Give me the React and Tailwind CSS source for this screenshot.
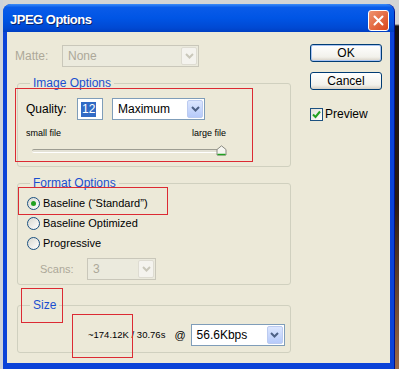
import React from "react";

const Chevron = ({ color = "#4d6185" }) => (
  <svg width="9" height="6" viewBox="0 0 9 6">
    <path d="M1 1 L4.5 4.5 L8 1" fill="none" stroke={color} strokeWidth="2" />
  </svg>
);

const Select = ({ value, className = "", disabled = false }) => (
  <div
    className={`flex h-[22px] items-center border pl-[5px] pr-[1px] ${
      disabled
        ? "border-[#c9c7ba] bg-[#ebeadd] text-[#aca899]"
        : "border-[#7f9db9] bg-white text-black"
    } ${className}`}
  >
    <span className="flex-1 text-[12px] leading-none">{value}</span>
    <span
      className={`flex h-[18px] w-[16px] items-center justify-center rounded-[2px] border ${
        disabled
          ? "border-[#dedcd2] bg-[#f4f3ee]"
          : "border-[#bccbf0] bg-[linear-gradient(to_bottom,#dce6fe,#b6cafa)]"
      }`}
    >
      <Chevron color={disabled ? "#c9c7ba" : "#4d6185"} />
    </span>
  </div>
);

const Radio = ({ label, checked }) => (
  <div className="flex h-[20px] items-center pl-[9px]">
    <span className="flex h-[13px] w-[13px] items-center justify-center rounded-full border border-[#1c5180] bg-[linear-gradient(135deg,#d8d8d0,#ffffff)]">
      {checked && <span className="h-[5px] w-[5px] rounded-full bg-[#21a121]" />}
    </span>
    <span className="ml-[3px] text-[11px]">{label}</span>
  </div>
);

const XpButton = ({ children, primary }) => (
  <button
    className={`flex h-[18px] w-[72px] items-center justify-center rounded-[3px] border border-[#003c74] bg-[linear-gradient(to_bottom,#ffffff,#f2f1eb_75%,#d6d0c5)] text-[12px] text-black ${
      primary ? "shadow-[inset_0_0_0_1px_#a9c4f3]" : ""
    }`}
  >
    {children}
  </button>
);

const Legend = ({ children }) => (
  <span className="-mt-[8px] ml-[12px] block w-fit bg-[#ece9d8] px-[3px] text-[12px] leading-[14px] text-[#1a4fd0]">
    {children}
  </span>
);

const App = () => {
  return (
    <div className="relative h-[369px] w-[399px] overflow-hidden bg-[linear-gradient(to_right,#cdd2da_0,#cdd2da_3px,transparent_3px),linear-gradient(to_bottom,#d4d4d4_0px,#d4d4d4_24px,#141010_26px,#2b1a12_55%,#9c6a48_100%)] font-['Liberation_Sans',Arial,sans-serif] text-black">
      {/* Window */}
      <div className="ml-[3px] mt-[4px] flex h-[370px] w-[392px] flex-col rounded-t-[8px] border-r border-[#00138c] bg-[#0b43d8]">
        {/* Title bar */}
        <div className="flex h-[28px] items-center justify-between rounded-t-[8px] bg-[linear-gradient(to_bottom,#3d8cf7_0%,#0a5be9_12%,#0055e5_50%,#0049d3_85%,#003fc2_100%)] pl-[7px] pr-[5px] pt-[4px]">
          <span className="text-[13px] font-bold tracking-[-0.5px] text-white [text-shadow:1px_1px_0_#0a246a]">
            JPEG Options
          </span>
          <span className="flex h-[21px] w-[21px] items-center justify-center rounded-[3px] border border-white bg-[linear-gradient(135deg,#ef9470,#d9461c)]">
            <svg width="11" height="11" viewBox="0 0 11 11">
              <path d="M1.5 1.5 L9.5 9.5 M9.5 1.5 L1.5 9.5" stroke="#fff" strokeWidth="2" strokeLinecap="round" />
            </svg>
          </span>
        </div>

        {/* Body */}
        <div className="relative mx-[4px] flex h-[331px] items-start bg-[#ece9d8]">
          {/* Left column */}
          <div className="ml-[8px] w-[276px] pt-[13px]">
            <div className="flex h-[22px] items-center">
              <span className="w-[47px] text-[12px] text-[#aca899]">Matte:</span>
              <Select value="None" disabled className="w-[137px]" />
            </div>

            {/* Image Options */}
            <div className="ml-[2px] mt-[16px] h-[84px] w-[274px] rounded-[3px] border border-[#d0d0bf]">
              <Legend>Image Options</Legend>
              <div className="pl-[8px]">
                <div className="mt-[8px] flex h-[22px] items-center">
                  <span className="w-[51px] text-[12px]">Quality:</span>
                  <div className="flex h-[22px] w-[26px] items-center border border-[#7f9db9] bg-white pl-[3px]">
                    <span className="bg-[#316ac5] px-[1px] text-[12px] leading-[15px] text-white">12</span>
                  </div>
                  <Select value="Maximum" className="ml-[9px] w-[93px]" />
                </div>
                <div className="mt-[8px] flex w-[200px] justify-between text-[9px] leading-[11px]">
                  <span>small file</span>
                  <span>large file</span>
                </div>
                <div className="relative ml-[6px] mt-[6px] h-[11px] w-[195px]">
                  <div className="absolute left-0 right-[5px] top-[4px] h-[4px] rounded-[2px] border-b border-t border-b-white border-t-[#9d9d92] bg-[#e4e2d6]" />
                  <svg className="absolute right-0 top-0" width="11" height="11" viewBox="0 0 11 11">
                    <path d="M1 4.5 L5.5 0.8 L10 4.5 V10 H1 Z" fill="#f6f6f1" stroke="#8a8a80" />
                    <path d="M1.5 9.5 H9.5" stroke="#21a121" strokeWidth="1.5" />
                  </svg>
                </div>
              </div>
            </div>

            {/* Format Options */}
            <div className="ml-[2px] mt-[16px] h-[102px] w-[274px] rounded-[3px] border border-[#d0d0bf]">
              <Legend>Format Options</Legend>
              <div className="mt-[3px]">
                <Radio label="Baseline (“Standard”)" checked />
                <Radio label="Baseline Optimized" />
                <Radio label="Progressive" />
              </div>
              <div className="mt-[5px] flex h-[22px] items-center pl-[22px]">
                <span className="w-[47px] text-[11px] text-[#aca899]">Scans:</span>
                <Select value="3" disabled className="w-[69px]" />
              </div>
            </div>

            {/* Size */}
            <div className="ml-[2px] mt-[20px] h-[48px] w-[274px] rounded-[3px] border border-[#d0d0bf]">
              <Legend>Size</Legend>
              <div className="mt-[12px] flex h-[22px] items-center pl-[70px]">
                <span className="text-[9.5px]">~174.12K / 30.76s</span>
                <span className="ml-[9px] text-[11px]">@</span>
                <Select value="56.6Kbps" className="ml-[5px] w-[94px]" />
              </div>
            </div>
          </div>

          {/* Right column */}
          <div className="ml-[19px] flex flex-col pt-[12px]">
            <XpButton primary>OK</XpButton>
            <div className="mt-[10px]">
              <XpButton>Cancel</XpButton>
            </div>
            <div className="mt-[15px] flex items-center">
              <span className="flex h-[13px] w-[13px] items-center justify-center border border-[#1c5180] bg-[linear-gradient(135deg,#e0e0d8,#ffffff)]">
                <svg width="9" height="9" viewBox="0 0 9 9">
                  <path d="M1 4.5 L3.5 7 L8 1.5" fill="none" stroke="#21a121" strokeWidth="2" />
                </svg>
              </span>
              <span className="ml-[2px] text-[12px]">Preview</span>
            </div>
          </div>

          {/* Red annotation boxes */}
          <div className="absolute left-[8px] top-[56px] h-[74px] w-[238px] border border-[#dc2a33]" />
          <div className="absolute left-[11px] top-[155px] h-[28px] w-[150px] border border-[#dc2a33]" />
          <div className="absolute left-[14px] top-[256px] h-[35px] w-[42px] border border-[#dc2a33]" />
          <div className="absolute left-[65px] top-[282px] h-[44px] w-[61px] border border-[#dc2a33]" />
        </div>
      </div>
    </div>
  );
};

export default App;
